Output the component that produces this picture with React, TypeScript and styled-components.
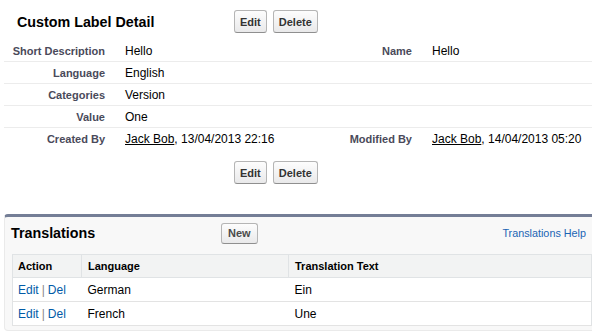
import React from "react";
import styled, { createGlobalStyle } from "styled-components";

const GlobalStyle = createGlobalStyle`
    html, body {
        margin: 0;
        padding: 0;
        background: #fff;
        overflow: hidden;
    }
    body {
        font-family: "Liberation Sans", Arial, sans-serif;
        color: #000;
    }
`;

const Page = styled.div`
    width: 600px;
`;

const Detail = styled.div`
    padding-left: 4px;
`;

const DetailHeader = styled.div`
    display: flex;
    align-items: center;
    padding: 10px 0 7px;
`;

const PageTitle = styled.h2`
    margin: 0;
    width: 217px;
    padding-left: 13px;
    font-size: 14.3px;
    font-weight: bold;
    color: #000;
`;

const ButtonBar = styled.div<{ $top?: number }>`
    display: flex;
    gap: 6px;
    padding-left: ${({ $top }) => ($top ? 230 : 0)}px;
    padding-top: ${({ $top }) => $top ?? 0}px;
`;

const Btn = styled.button<{ $small?: boolean }>`
    font-family: inherit;
    font-size: 11px;
    font-weight: bold;
    color: ${({ $small }) => ($small ? "#4a4a4a" : "#333")};
    height: ${({ $small }) => ($small ? 21 : 23)}px;
    padding: 0 ${({ $small }) => ($small ? 6 : 5)}px;
    border: 1px solid #b5b5b5;
    border-bottom-color: #8f8f8f;
    border-radius: 3px;
    background: linear-gradient(#fdfdfd, #e9e9ea);
    cursor: pointer;
`;

const Row = styled.div<{ $last?: boolean }>`
    display: grid;
    grid-template-columns: 111px 196px 111px 1fr;
    align-items: center;
    height: 21px;
    border-bottom: 1px solid ${({ $last }) => ($last ? "transparent" : "#ececec")};
`;

const Label = styled.div`
    text-align: right;
    padding-right: 10px;
    font-size: 11px;
    font-weight: bold;
    color: #4a4a5a;
`;

const Value = styled.div`
    padding-left: 10px;
    font-size: 12px;
    color: #000;
    white-space: nowrap;
`;

const UserLink = styled.a`
    color: #000;
    text-decoration: underline;
`;

const Panel = styled.div`
    margin: 30px 0 0 4px;
    background: #f8f8f8;
    border: 1px solid #eaeaea;
    border-top: 3px solid #747e96;
    border-radius: 4px;
    padding-bottom: 4px;
`;

const PanelHeader = styled.div`
    display: flex;
    align-items: center;
    height: 32px;
    margin-bottom: 5px;
    padding: 0 13px 0 6px;
`;

const PanelTitle = styled.h3`
    margin: 0;
    width: 210px;
    font-size: 14.3px;
    font-weight: bold;
    color: #000;
`;

const HelpLink = styled.a`
    margin-left: auto;
    font-size: 10.8px;
    color: #1a64b4;
    text-decoration: none;
`;

const Table = styled.table`
    margin: 0 7px;
    width: calc(100% - 14px);
    table-layout: fixed;
    border-collapse: collapse;
    background: #fff;
    border: 1px solid #e0e3e5;
`;

const Th = styled.th<{ $w?: number }>`
    box-sizing: border-box;
    width: ${({ $w }) => ($w ? `${$w}px` : "auto")};
    height: 23px;
    padding: 0 6px;
    text-align: left;
    font-size: 11px;
    font-weight: bold;
    color: #000;
    background: #f2f3f3;
    border: 1px solid #e0e3e5;
    &:first-child {
        padding-left: 5px;
    }
`;

const Td = styled.td`
    height: 23px;
    padding: 0 6px;
    font-size: 12px;
    color: #000;
    border-bottom: 1px solid #e3e3e3;
    &:first-child {
        padding-left: 5px;
    }
`;

const ActionLink = styled.a`
    color: #015ba7;
    text-decoration: none;
`;

const Pipe = styled.span`
    color: #8a8a8a;
    margin: 0 3px;
`;

type Field = { label: string; value: React.ReactNode; label2?: string; value2?: React.ReactNode };

const fields: Field[] = [
    { label: "Short Description", value: "Hello", label2: "Name", value2: "Hello" },
    { label: "Language", value: "English" },
    { label: "Categories", value: "Version" },
    { label: "Value", value: "One" },
    {
        label: "Created By",
        value: <><UserLink href="#">Jack Bob</UserLink>, 13/04/2013 22:16</>,
        label2: "Modified By",
        value2: <><UserLink href="#">Jack Bob</UserLink>, 14/04/2013 05:20</>,
    },
];

const translations = [
    { language: "German", text: "Ein" },
    { language: "French", text: "Une" },
];

const App = () => {
    return (
        <Page>
            <GlobalStyle />
            <Detail>
                <DetailHeader>
                    <PageTitle>Custom Label Detail</PageTitle>
                    <ButtonBar>
                        <Btn>Edit</Btn>
                        <Btn>Delete</Btn>
                    </ButtonBar>
                </DetailHeader>
                {fields.map((f, i) => (
                    <Row key={f.label} $last={i === fields.length - 1}>
                        <Label>{f.label}</Label>
                        <Value>{f.value}</Value>
                        <Label>{f.label2}</Label>
                        <Value>{f.value2}</Value>
                    </Row>
                ))}
                <ButtonBar $top={11}>
                    <Btn>Edit</Btn>
                    <Btn>Delete</Btn>
                </ButtonBar>
            </Detail>
            <Panel>
                <PanelHeader>
                    <PanelTitle>Translations</PanelTitle>
                    <Btn $small>New</Btn>
                    <HelpLink href="#">Translations Help</HelpLink>
                </PanelHeader>
                <Table>
                    <thead>
                        <tr>
                            <Th $w={69}>Action</Th>
                            <Th $w={207}>Language</Th>
                            <Th>Translation Text</Th>
                        </tr>
                    </thead>
                    <tbody>
                        {translations.map((t) => (
                            <tr key={t.language}>
                                <Td>
                                    <ActionLink href="#">Edit</ActionLink>
                                    <Pipe>|</Pipe>
                                    <ActionLink href="#">Del</ActionLink>
                                </Td>
                                <Td>{t.language}</Td>
                                <Td>{t.text}</Td>
                            </tr>
                        ))}
                    </tbody>
                </Table>
            </Panel>
        </Page>
    );
};

export default App;
